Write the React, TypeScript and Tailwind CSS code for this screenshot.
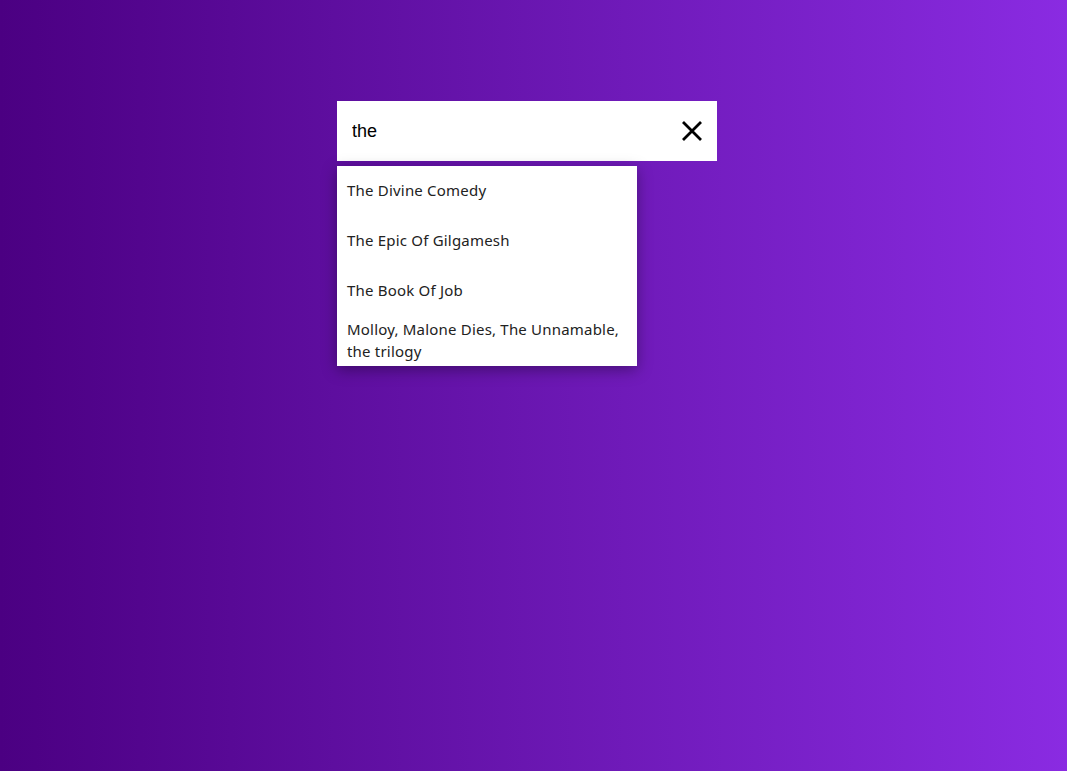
import { useState } from "react";

const BOOKS = [
  "The Divine Comedy",
  "The Epic Of Gilgamesh",
  "The Book Of Job",
  "Molloy, Malone Dies, The Unnamable, the trilogy",
];

export default function App() {
  const [query, setQuery] = useState("the");

  return (
    <div className="min-h-screen w-full bg-gradient-to-r from-[#4b0082] to-[#8a2be2] pt-[101px]">
      <div className="ml-[337px] w-[380px]">
        {/* Search box */}
        <div className="flex h-[60px] items-center bg-white pl-[15px] pr-[13px]">
          <input
            value={query}
            onChange={(e) => setQuery(e.target.value)}
            autoFocus
            className="flex-1 bg-transparent text-[18px] text-black outline-none caret-black font-['Liberation_Sans',Arial,sans-serif]"
          />
          <button
            onClick={() => setQuery("")}
            className="flex h-[24px] w-[24px] items-center justify-center"
            aria-label="Clear"
          >
            <svg width="22" height="22" viewBox="0 0 22 22">
              <path
                d="M2 2 L20 20 M20 2 L2 20"
                stroke="#000"
                strokeWidth="2.8"
                fill="none"
              />
            </svg>
          </button>
        </div>

        {/* Suggestions */}
        {query && (
          <ul className="mt-[5px] w-[300px] bg-white shadow-[0_4px_14px_rgba(0,0,0,0.35)]">
            {BOOKS.map((b) => (
              <li
                key={b}
                className="flex h-[50px] items-center px-[10px] pb-[2px] text-[15px] leading-[22px] tracking-[0.2px] text-[#222] font-['Noto_Sans',sans-serif]"
              >
                {b}
              </li>
            ))}
          </ul>
        )}
      </div>
    </div>
  );
}
